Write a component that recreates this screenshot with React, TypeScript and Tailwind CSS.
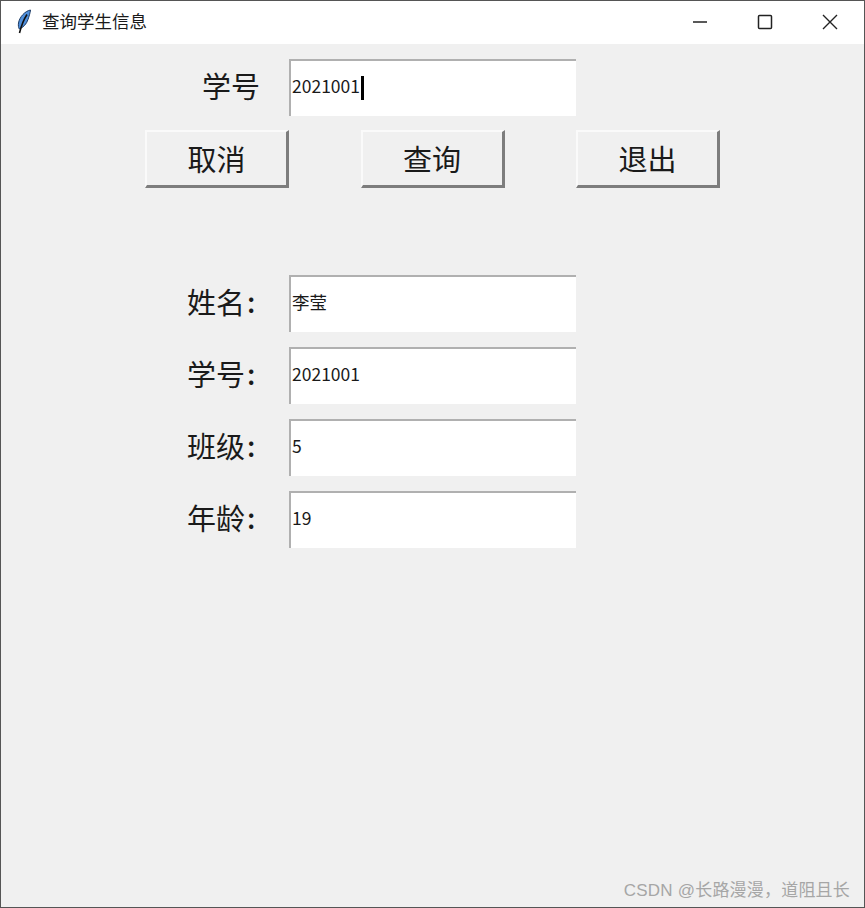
import React from 'react';

const cjk = "font-['Noto_Sans_CJK_SC','Noto_Sans',sans-serif]";

const Entry = ({ value, caret }: { value: string; caret?: boolean }) => (
  <div className="flex h-[57px] w-[287px] items-center border-t-2 border-l-2 border-t-[#b0b0b0] border-l-[#b0b0b0] bg-white pl-[1px] pb-[6px] text-[17.500px] leading-none text-[#1a1a1a]">
    <span>{value}</span>
    {caret && <span className="mt-[4px] ml-[1px] h-[24px] w-[3px] bg-black" />}
  </div>
);

const Btn = ({ label }: { label: string }) => (
  <div className="flex h-[58px] w-[144px] items-center justify-center border-t-2 border-l-2 border-r-[3px] border-b-[3px] border-t-[#fafafa] border-l-[#fafafa] border-r-[#7d7d7d] border-b-[#7d7d7d] bg-[#f0f0f0] text-[29px] leading-none text-[#1a1a1a]">
    {label}
  </div>
);

const Row = ({ label, value }: { label: string; value: string }) => (
  <div className="flex items-center">
    <div className="flex w-[288px] items-center pb-[5px] pl-[186px] text-[29px] leading-none text-[#1a1a1a]">
      <span>{label}</span>
      <span className="ml-[2px] text-[28px] font-medium">:</span>
    </div>
    <Entry value={value} />
  </div>
);

export default function App() {
  return (
    <div className={`relative flex h-[908px] w-[865px] flex-col overflow-hidden border border-[#555555] bg-[#f0f0f0] ${cjk}`}>
      {/* title bar */}
      <div className="flex h-[43px] items-center bg-white">
        <svg width="16" height="26" viewBox="0 0 16 26" className="ml-[15px] -mt-[2px]">
          <path d="M14.500 1C9 2 3.500 8 2.500 14c-.4 2.500 0 4.500.8 6 4-1.500 7.200-5 8.700-9.500 1-3 2.200-6.500 2.500-9.500z" fill="#4f8fdc" stroke="#1c3a63" strokeWidth="1" />
          <path d="M11 5.500C8 10 5.500 16 3.500 24" fill="none" stroke="#111" strokeWidth="1.600" />
        </svg>
        <span className="ml-[10px] pb-[4px] text-[17.500px] leading-none text-[#1a1a1a]">查询学生信息</span>
        <div className="ml-auto flex items-center pb-[1px]">
          <svg width="16" height="16" viewBox="0 0 16 16" className="mr-[49px]">
            <path d="M1 8h14" stroke="#222" strokeWidth="1.500" />
          </svg>
          <svg width="16" height="16" viewBox="0 0 16 16" className="mr-[49px]">
            <rect x="1.500" y="1.500" width="13" height="13" rx="1" fill="none" stroke="#222" strokeWidth="1.500" />
          </svg>
          <svg width="16" height="16" viewBox="0 0 16 16" className="mr-[26px]">
            <path d="M1 1l14 14M15 1L1 15" stroke="#222" strokeWidth="1.400" />
          </svg>
        </div>
      </div>

      {/* query row */}
      <div className="mt-[15px] flex items-center">
        <div className="w-[288px] pb-[4px] pl-[201px] text-[29px] leading-none text-[#1a1a1a]">学号</div>
        <Entry value="2021001" caret />
      </div>

      {/* buttons */}
      <div className="mt-[14px] flex gap-[71.500px] pl-[144px]">
        <Btn label="取消" />
        <Btn label="查询" />
        <Btn label="退出" />
      </div>

      {/* result fields */}
      <div className="mt-[87px] flex flex-col gap-[15px]">
        <Row label="姓名" value="李莹" />
        <Row label="学号" value="2021001" />
        <Row label="班级" value="5" />
        <Row label="年龄" value="19" />
      </div>

      <div className="absolute right-[14px] bottom-[8px] font-['Liberation_Sans','Noto_Sans_CJK_SC',sans-serif] text-[17px] leading-none tracking-[0.200px] text-[#a6a6a6]">
        CSDN @长路漫漫，道阻且长
      </div>
    </div>
  );
}
